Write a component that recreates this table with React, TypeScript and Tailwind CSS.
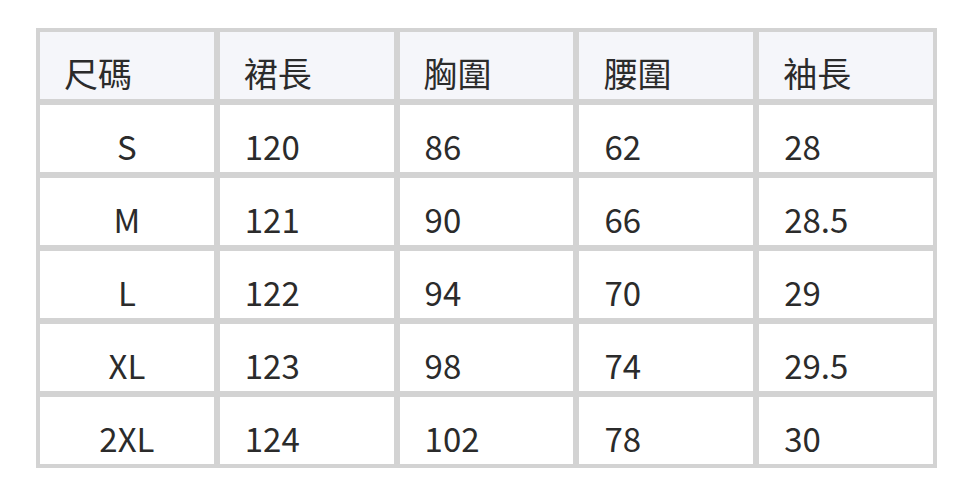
import React from "react";

const headers = ["尺碼", "裙長", "胸圍", "腰圍", "袖長"];
const rows = [
  ["S", "120", "86", "62", "28"],
  ["M", "121", "90", "66", "28.5"],
  ["L", "122", "94", "70", "29"],
  ["XL", "123", "98", "74", "29.5"],
  ["2XL", "124", "102", "78", "30"],
];

export default function App() {
  return (
    <div
      className="w-[972px] h-[495px] bg-white pl-[36px] pt-[28px] text-[#2b2b2b]"
      style={{ fontFamily: '"Noto Sans CJK TC", "Noto Sans", sans-serif' }}
    >
      <div className="w-[901px] bg-[#d3d3d3] p-[4px] grid grid-cols-5 gap-[6px] auto-rows-[67px] text-[33px] leading-[48px]">
        {headers.map((h) => (
          <div key={h} className="bg-[#f5f6fa] flex items-end pl-[24px] pb-[2px] text-[34px]">
            {h}
          </div>
        ))}
        {rows.map((r) =>
          r.map((c, i) => (
            <div
              key={r[0] + i}
              className={
                "bg-white flex items-end pb-[2px] " +
                (i === 0 ? "justify-center" : "pl-[25px]")
              }
            >
              {c}
            </div>
          ))
        )}
      </div>
    </div>
  );
}
